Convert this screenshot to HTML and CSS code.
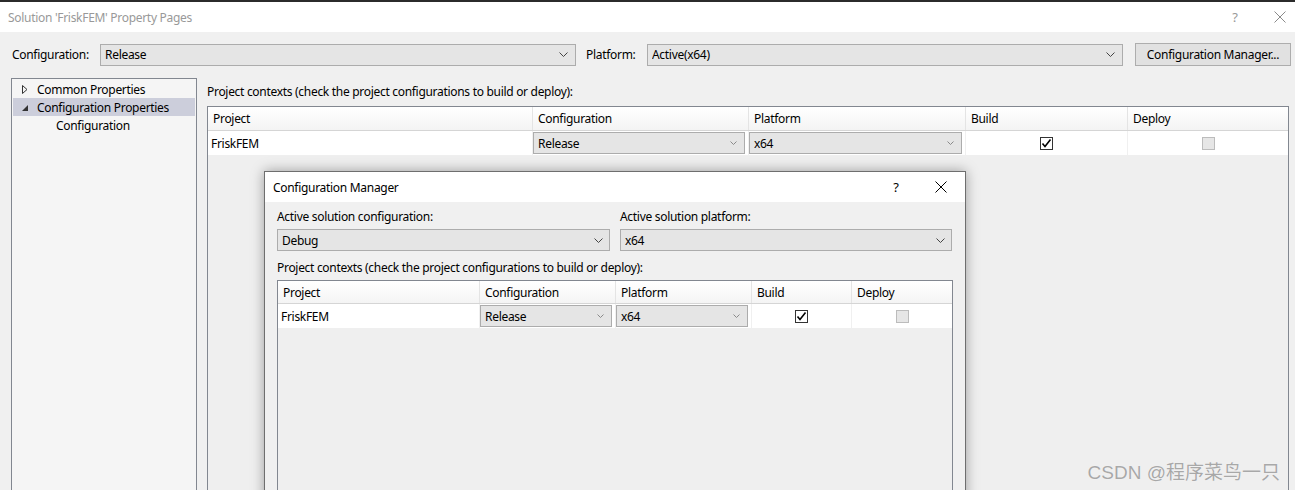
FILE: index.html
```html
<!DOCTYPE html>
<html>
<head>
<meta charset="utf-8">
<link rel="stylesheet" href="styles.css">
</head>
<body>
<div class="topstrip"></div>
<div class="titlebar">
  <span class="title">Solution 'FriskFEM' Property Pages</span>
  <span class="tb-help">?</span>
  <span class="tb-close"><svg width="12" height="12" viewBox="0 0 12 12"><path d="M0.5 0.5 L11.5 11.5 M11.5 0.5 L0.5 11.5" stroke="#8a8a8a" stroke-width="1" fill="none"/></svg></span>
</div>
<div class="main">
  <div class="config-row">
    <span class="lbl lbl-config">Configuration:</span>
    <div class="select sel-top"><span class="sel-text">Release</span><svg class="chev" width="9" height="5" viewBox="0 0 9 5"><path d="M0.5 0.5 L4.5 4.5 L8.5 0.5" stroke="#444" fill="none"/></svg></div>
    <span class="lbl lbl-platform">Platform:</span>
    <div class="select sel-top"><span class="sel-text">Active(x64)</span><svg class="chev" width="9" height="5" viewBox="0 0 9 5"><path d="M0.5 0.5 L4.5 4.5 L8.5 0.5" stroke="#444" fill="none"/></svg></div>
    <div class="button">Configuration Manager...</div>
  </div>
  <div class="panes">
    <div class="tree">
      <div class="tree-row"><svg class="exp" width="6" height="9" viewBox="0 0 6 9"><path d="M0.5 0.5 L5 4.5 L0.5 8.5 Z" stroke="#333" fill="none"/></svg><span>Common Properties</span></div>
      <div class="tree-row selected"><svg class="exp" width="6" height="9" viewBox="0 0 6 9"><path d="M6 2 L6 8 L0 8 Z" fill="#333"/></svg><span>Configuration Properties</span></div>
      <div class="tree-row child"><span>Configuration</span></div>
    </div>
    <div class="content">
      <div class="caption">Project contexts (check the project configurations to build or deploy):</div>
      <div class="grid grid-main">
        <div class="grow ghead">
          <div class="gcell">Project</div>
          <div class="gcell">Configuration</div>
          <div class="gcell">Platform</div>
          <div class="gcell">Build</div>
          <div class="gcell last">Deploy</div>
        </div>
        <div class="grow gdata">
          <div class="gcell">FriskFEM</div>
          <div class="gcell sel-cell"><div class="select sel-grid"><span class="sel-text">Release</span><svg class="chev" width="7" height="4" viewBox="0 0 7 4"><path d="M0.5 0.5 L3.5 3.5 L6.5 0.5" stroke="#8a8a8a" fill="none"/></svg></div></div>
          <div class="gcell sel-cell"><div class="select sel-grid"><span class="sel-text">x64</span><svg class="chev" width="7" height="4" viewBox="0 0 7 4"><path d="M0.5 0.5 L3.5 3.5 L6.5 0.5" stroke="#8a8a8a" fill="none"/></svg></div></div>
          <div class="gcell center"><span class="check"><svg width="11" height="11" viewBox="0 0 11 11"><path d="M1.5 5.5 L4 8.5 L9.5 1.5" stroke="#000" stroke-width="1.6" fill="none"/></svg></span></div>
          <div class="gcell center last"><span class="check disabled"></span></div>
        </div>
      </div>
    </div>
  </div>
  <div class="dialog">
    <div class="dlg-title">
      <span class="dlg-title-text">Configuration Manager</span>
      <span class="dlg-help">?</span>
      <span class="dlg-close"><svg width="12" height="12" viewBox="0 0 12 12"><path d="M0.5 0.5 L11.5 11.5 M11.5 0.5 L0.5 11.5" stroke="#000" stroke-width="1" fill="none"/></svg></span>
    </div>
    <div class="dlg-body">
      <div class="dlg-cols">
        <div class="dlg-col">
          <div class="dlg-lbl">Active solution configuration:</div>
          <div class="select sel-dlg"><span class="sel-text">Debug</span><svg class="chev" width="9" height="5" viewBox="0 0 9 5"><path d="M0.5 0.5 L4.5 4.5 L8.5 0.5" stroke="#444" fill="none"/></svg></div>
        </div>
        <div class="dlg-col">
          <div class="dlg-lbl">Active solution platform:</div>
          <div class="select sel-dlg"><span class="sel-text">x64</span><svg class="chev" width="9" height="5" viewBox="0 0 9 5"><path d="M0.5 0.5 L4.5 4.5 L8.5 0.5" stroke="#444" fill="none"/></svg></div>
        </div>
      </div>
      <div class="dlg-caption">Project contexts (check the project configurations to build or deploy):</div>
      <div class="grid grid-dlg">
        <div class="grow ghead">
          <div class="gcell">Project</div>
          <div class="gcell">Configuration</div>
          <div class="gcell">Platform</div>
          <div class="gcell">Build</div>
          <div class="gcell last">Deploy</div>
        </div>
        <div class="grow gdata">
          <div class="gcell">FriskFEM</div>
          <div class="gcell sel-cell"><div class="select sel-grid"><span class="sel-text">Release</span><svg class="chev" width="7" height="4" viewBox="0 0 7 4"><path d="M0.5 0.5 L3.5 3.5 L6.5 0.5" stroke="#8a8a8a" fill="none"/></svg></div></div>
          <div class="gcell sel-cell"><div class="select sel-grid"><span class="sel-text">x64</span><svg class="chev" width="7" height="4" viewBox="0 0 7 4"><path d="M0.5 0.5 L3.5 3.5 L6.5 0.5" stroke="#8a8a8a" fill="none"/></svg></div></div>
          <div class="gcell center"><span class="check"><svg width="11" height="11" viewBox="0 0 11 11"><path d="M1.5 5.5 L4 8.5 L9.5 1.5" stroke="#000" stroke-width="1.6" fill="none"/></svg></span></div>
          <div class="gcell center last"><span class="check disabled"></span></div>
        </div>
      </div>
    </div>
  </div>
</div>
<div class="watermark">CSDN @程序菜鸟一只</div>
</body>
</html>
```

FILE: styles.css
```css
* { box-sizing: border-box; }
html, body { margin: 0; padding: 0; }
body {
  width: 1295px;
  height: 490px;
  overflow: hidden;
  position: relative;
  background: #f0f0f0;
  font-family: "Noto Sans", "Open Sans", sans-serif;
  font-size: 12px;
  letter-spacing: -0.3px;
  color: #000;
}
.topstrip { height: 2px; background: #2b2b2b; }
.titlebar {
  height: 30px;
  background: #fff;
  display: flex;
  align-items: center;
  padding-left: 8px;
}
.titlebar .title { flex: 1; color: #999; }
.tb-help { width: 30px; text-align: center; color: #999; font-size: 13px; }
.tb-close { width: 30px; margin-left: 15px; display: flex; justify-content: center; }

.main {
  position: relative;
  height: 458px;
  padding-top: 11px;
  overflow: hidden;
}

.config-row {
  display: flex;
  align-items: center;
  height: 23px;
  padding-left: 12px;
}
.lbl-config { width: 88px; }
.lbl-platform { width: 61px; margin-left: 10px; }
.select {
  display: flex;
  align-items: center;
  background: #e5e5e5;
  border: 1px solid #acacac;
}
.sel-text { flex: 1; white-space: nowrap; overflow: hidden; }
.sel-top { width: 476px; height: 22px; padding: 0 7px 0 4px; }
.button {
  margin-left: 12px;
  width: 156px;
  height: 23px;
  background: #e1e1e1;
  border: 1px solid #adadad;
  display: flex;
  align-items: center;
  justify-content: center;
}

.panes {
  display: flex;
  margin-top: 12px;
  height: 420px;
}
.tree {
  margin-left: 11px;
  width: 186px;
  background: #f5f5f5;
  border: 1px solid #828790;
  padding: 1px;
}
.tree-row {
  height: 18px;
  display: flex;
  align-items: center;
  padding-left: 9px;
}
.tree-row .exp { width: 6px; margin-right: 9px; }
.tree-row.selected { background: #cccedb; }
.tree-row.child { padding-left: 43px; }

.content {
  margin-left: 10px;
  width: 1082px;
  display: flex;
  flex-direction: column;
}
.caption { height: 16px; line-height: 16px; margin: 6px 0; }
.grid {
  border: 1px solid #828790;
  background: #efefef;
  flex: 1;
}
.grow { display: flex; }
.ghead {
  height: 24px;
  background: linear-gradient(#ffffff, #f4f4f4);
  border-bottom: 1px solid #d5d5d5;
}
.gdata { height: 24px; background: #fff; }
.gcell {
  display: flex;
  align-items: center;
  padding-left: 5px;
  border-right: 1px solid #e4e4e4;
  flex: none;
}
.gdata .gcell { border-right-color: #f0f0f0; padding-left: 3px; }
.gcell.last { flex: 1; border-right: none; }
.gcell.center { justify-content: center; padding-left: 0; }
.gdata .sel-cell { padding: 1px 3px 1px 0; }
.sel-grid { width: 100%; height: 22px; padding: 0 7px 0 4px; }

.grid-main .gcell:nth-child(1) { width: 325px; }
.grid-main .gcell:nth-child(2) { width: 216px; }
.grid-main .gcell:nth-child(3) { width: 217px; }
.grid-main .gcell:nth-child(4) { width: 162px; }

.check {
  width: 13px;
  height: 13px;
  border: 1px solid #333;
  background: #fff;
  display: flex;
  align-items: center;
  justify-content: center;
}
.check.disabled { border-color: #bcbcbc; background: #e6e6e6; }

.dialog {
  position: absolute;
  left: 264px;
  top: 139px;
  width: 702px;
  height: 340px;
  border: 1px solid #6e6e6e;
  background: #f0f0f0;
  box-shadow: 0 0 12px rgba(0,0,0,0.35);
  display: flex;
  flex-direction: column;
}
.dlg-title {
  height: 30px;
  background: #fff;
  display: flex;
  align-items: center;
  padding-left: 8px;
  flex: none;
}
.dlg-title-text { flex: 1; }
.dlg-help { width: 30px; text-align: center; font-size: 13px; }
.dlg-close { width: 30px; margin-left: 15px; margin-right: 9px; display: flex; justify-content: center; }
.dlg-body {
  padding: 7px 12px 0 12px;
  flex: 1;
  display: flex;
  flex-direction: column;
}
.dlg-cols { display: flex; gap: 10px; }
.dlg-col { width: 333px; }
.dlg-col + .dlg-col { width: 332px; }
.dlg-lbl { height: 16px; line-height: 16px; margin-bottom: 4px; }
.sel-dlg { height: 22px; padding: 0 6px 0 4px; }
.dlg-caption { height: 16px; line-height: 16px; margin: 9px 0 4px; }
.grid-dlg .gcell:nth-child(1) { width: 202px; }
.grid-dlg .gcell:nth-child(2) { width: 136px; }
.grid-dlg .gcell:nth-child(3) { width: 136px; }
.grid-dlg .gcell:nth-child(4) { width: 100px; }
.grid-dlg .ghead { height: 23px; }

.watermark {
  position: absolute;
  right: 15px;
  top: 457px;
  font-family: "Liberation Sans", "Noto Sans CJK SC", sans-serif;
  font-size: 19px;
  letter-spacing: 0;
  color: #a8a8a8;
  text-shadow: 0 0 1px #fff;
  white-space: nowrap;
}
```
